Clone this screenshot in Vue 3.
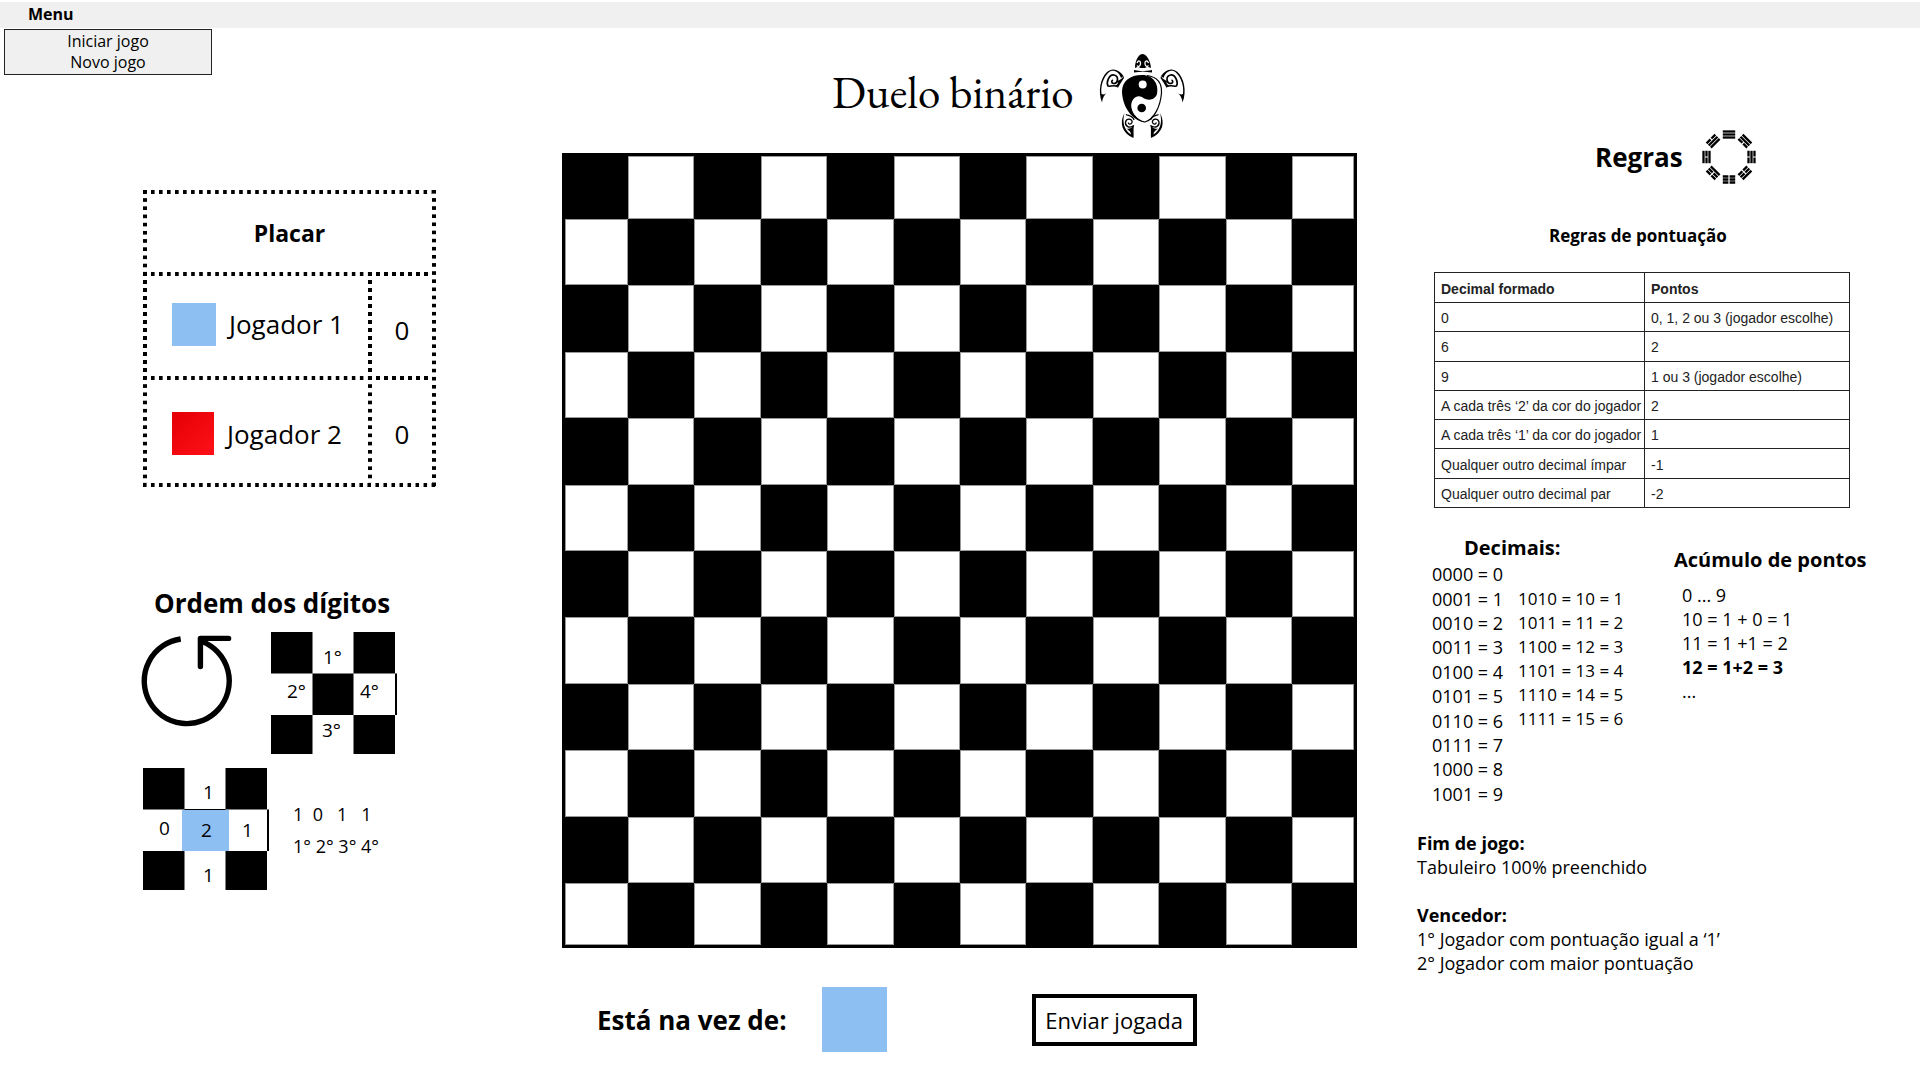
<script setup>
const size = 12
const cells = Array.from({ length: size * size }, (_, i) => (Math.floor(i / size) + i) % 2 === 0)

const players = [
  { name: 'Jogador 1', score: 0, tone: 'blue' },
  { name: 'Jogador 2', score: 0, tone: 'red' },
]

const exampleDigits = '1  0   1   1'

const scoring = [
  ['0', '0, 1, 2 ou 3 (jogador escolhe)'],
  ['6', '2'],
  ['9', '1 ou 3 (jogador escolhe)'],
  ['A cada três ‘2’ da cor do jogador', '2'],
  ['A cada três ‘1’ da cor do jogador', '1'],
  ['Qualquer outro decimal ímpar', '-1'],
  ['Qualquer outro decimal par', '-2'],
]

const single = ['0000 = 0', '0001 = 1', '0010 = 2', '0011 = 3', '0100 = 4', '0101 = 5', '0110 = 6', '0111 = 7', '1000 = 8', '1001 = 9']
const double = ['1010 = 10 = 1', '1011 = 11 = 2', '1100 = 12 = 3', '1101 = 13 = 4', '1110 = 14 = 5', '1111 = 15 = 6']

// Lines of each trigram from the outside in; 1 is whole, 0 is broken.
const trigrams = ['111', '110', '010', '100', '000', '001', '101', '011']
</script>

<template>
  <div class="page">
    <header class="menubar">
      <button type="button" class="menu-button">Menu</button>
      <ul class="menu">
        <li><button type="button">Iniciar jogo</button></li>
        <li><button type="button">Novo jogo</button></li>
      </ul>
    </header>

    <main class="columns">
      <section class="side">
        <div class="score-frame">
          <table class="score">
            <thead>
              <tr><th colspan="2">Placar</th></tr>
            </thead>
            <tbody>
              <tr v-for="p in players" :key="p.name" :class="p.tone">
                <td class="name">
                  <div class="player"><span class="swatch" :class="p.tone"></span>{{ p.name }}</div>
                </td>
                <td class="value">{{ p.score }}</td>
              </tr>
            </tbody>
          </table>
        </div>

        <h2 class="order-title">Ordem dos dígitos</h2>
        <div class="order-row">
          <svg class="turn" viewBox="0 -3 92 98" width="92" height="98" fill="none" stroke="#000" stroke-width="5.4">
            <path d="M39.7 4A42.5 42.5 0 1 0 61 6.4" />
            <path d="M87.6 3.4H59.4V31.6" stroke-linecap="round" stroke-linejoin="round" />
          </svg>
          <svg class="diagram" viewBox="0 0 126 122" width="126" height="122">
            <path d="M0 0H41.5V41.5H0ZM82.5 0H124V41.5H82.5ZM41.5 41.5H82.5V83H41.5ZM0 83H41.5V122H0ZM82.5 83H124V122H82.5ZM124 41.5H126V83H124Z" />
            <text x="52" y="32">1°</text>
            <text x="16" y="66">2°</text>
            <text x="89" y="66">4°</text>
            <text x="51" y="105">3°</text>
          </svg>
        </div>
        <div class="example-row">
          <svg class="diagram" viewBox="0 0 126 122" width="126" height="122">
            <path d="M0 0H41.5V41.5H0ZM82.5 0H124V41.5H82.5ZM0 83H41.5V122H0ZM82.5 83H124V122H82.5ZM124 41.5H126V83H124ZM41.5 41H82.5V42H41.5Z" />
            <rect x="39" y="42" width="47" height="41" fill="#8dbff2" />
            <text x="60" y="31">1</text>
            <text x="16" y="67">0</text>
            <text x="58" y="69">2</text>
            <text x="99" y="69">1</text>
            <text x="60" y="114">1</text>
          </svg>
          <div class="digits">
            <p>{{ exampleDigits }}</p>
            <p>1° 2° 3° 4°</p>
          </div>
        </div>
      </section>

      <section class="center">
        <div class="title-row">
          <h1>Duelo binário</h1>
          <svg viewBox="0 -2 100 100" width="100" height="100" aria-hidden="true">
            <path d="M44 23C44 15 48 9 51.5 9S59.5 15 60 23C57 21.5 55.5 22 54 23H49.5C48 22 46.5 21.500 44 23Z" />
            <path d="M43 25C49 26.500 54 26.500 61 25V27.500C54 26.500 49 26.500 43 27.500Z" />
            <path d="M46 18C47.500 14.500 50 16 49.500 19S47 22 46 20.500M57.500 18C56 14.500 53.500 16 54 19S56.500 22 57.500 20.500" fill="none" stroke="#fff" stroke-width="1.300" />
            <path d="M51 30C63 30 68 40 66 49C63.500 56 56 56 51 52C45 49 39 55 40.500 63C42 70 47 75 54 77.500C41 76 31 61 31 46C31.500 36 39 30 51 30Z" />
            <path d="M56 30.500C67 32 71 39 70.500 48C69.500 60 64 74 54 77C50 76.500 46 74 43 70" fill="none" stroke="#000" stroke-width="1.200" />
            <circle cx="51.700" cy="39.500" r="4" fill="#fff" />
            <circle cx="50.700" cy="63" r="4.300" />
            <g id="limbs">
              <path d="M32.500 31C28 24 21 22.500 16 27C9.500 33 6.500 46 11 57.500C11.500 53 13 50.500 15.500 48C13 50 11.500 49.500 10.500 49C9 38 15 28 20 26C24 25 28 27.500 30 33Z" />
              <path d="M32.500 31C31 34 28.500 35 26.500 36C27.500 38 26.500 40 24.500 40.500C26.500 41 27 42 26.500 43.500C28.500 40 30.500 36.500 33 33Z" />
              <path d="M26.500 41.500C23 39.500 18 42 17 41C15 37 18 29.500 23 30C28 31 27.500 38.500 22.500 38.500C20 38 20.500 35.500 22 35" fill="none" stroke="#000" stroke-width="1.700" />
              <path d="M33.500 68C28 78 31 88 42.500 93C43 89 42 85 43 80C40 84 38 84 35.500 83.500C38 85.500 40 87 40 89.500C33 85 31 77 33.500 68Z" />
              <path d="M43 80.500C38 84 34 81 34.500 77C36 72.500 42 74 41 77.500C40 80 37 79.500 37.500 77.500M35 69.500C38 71 42 71 43 75" fill="none" stroke="#000" stroke-width="1.300" />
            </g>
            <use href="#limbs" transform="translate(102.500 0) scale(-1 1)" />
          </svg>
        </div>

        <div class="board">
          <div v-for="(dark, i) in cells" :key="i" :class="{ dark }"></div>
        </div>

        <div class="turn-row">
          <h2>Está na vez de:</h2>
          <span class="current"></span>
          <button type="button" class="send">Enviar jogada</button>
        </div>
      </section>

      <section class="rules">
        <div class="rules-title">
          <h2>Regras</h2>
          <svg viewBox="-27 -27 54 54" width="54" height="54" aria-hidden="true">
            <g v-for="(t, i) in trigrams" :key="i" :transform="`rotate(${i * 45})`" stroke="#000" stroke-width="2.300">
              <path
                v-for="(bit, n) in t"
                :key="n"
                :d="bit === '1' ? `M-6.200 ${n * 3 - 25.500}H6.200` : `M-6.200 ${n * 3 - 25.500}H-.6M.6 ${n * 3 - 25.500}H6.200`"
              />
            </g>
          </svg>
        </div>
        <h3 class="scoring-title">Regras de pontuação</h3>
        <table class="scoring">
          <thead>
            <tr><th>Decimal formado</th><th>Pontos</th></tr>
          </thead>
          <tbody>
            <tr v-for="row in scoring" :key="row[0]">
              <td>{{ row[0] }}</td>
              <td>{{ row[1] }}</td>
            </tr>
          </tbody>
        </table>

        <div class="conversions">
          <div>
            <h3 class="decimals-title">Decimais:</h3>
            <div class="lists">
              <ul class="single"><li v-for="d in single" :key="d">{{ d }}</li></ul>
              <ul class="double"><li v-for="d in double" :key="d">{{ d }}</li></ul>
            </div>
          </div>
          <div class="sum">
            <h3>Acúmulo de pontos</h3>
            <ul>
              <li>0 ... 9</li>
              <li>10 = 1 + 0 = 1</li>
              <li>11 = 1 +1 = 2</li>
              <li><b>12 = 1+2 = 3</b></li>
              <li>...</li>
            </ul>
          </div>
        </div>

        <div class="ending">
          <h4>Fim de jogo:</h4>
          <p>Tabuleiro 100% preenchido</p>
          <h4 class="winner">Vencedor:</h4>
          <p>1° Jogador com pontuação igual a ‘1’</p>
          <p>2° Jogador com maior pontuação</p>
        </div>
      </section>
    </main>
  </div>
</template>

<style>
body {
  margin: 0;
  background: #fff;
}
</style>

<style scoped>
.page {
  font-family: "Open Sans", "Noto Sans", sans-serif;
  font-size: 18px;
  line-height: 24px;
  color: #000;
}
h1, h2, h3, h4, p, ul {
  margin: 0;
  padding: 0;
}
ul {
  list-style: none;
}
button {
  font: inherit;
  color: inherit;
  cursor: pointer;
}
svg {
  display: block;
  flex: none;
}

.menubar {
  position: relative;
  height: 26px;
  border-top: 2px solid #fff;
  background: #f0f0f0;
}
.menu-button {
  margin-left: 28px;
  padding: 0;
  border: 0;
  background: none;
  font-size: 16px;
  font-weight: 700;
  line-height: 24px;
  display: block;
}
.menu {
  position: absolute;
  top: 27px;
  left: 4px;
  box-sizing: border-box;
  width: 208px;
  padding: 1px 0;
  border: 1px solid #222;
  background: #f0f0f0;
}
.menu button {
  display: block;
  width: 100%;
  padding: 0;
  border: 0;
  background: none;
  font-size: 16px;
  line-height: 21px;
}

.columns {
  display: grid;
  grid-template-columns: 562fr 795fr 563fr;
}

.side {
  padding-top: 162px;
}
.score-frame {
  box-sizing: border-box;
  width: 293px;
  margin-left: 143px;
  padding: 0 4px 4px 0;
  background:
    linear-gradient(90deg, #000 4px, transparent 4px) 0 100% / calc((100% - 4px) / 36) 4px repeat-x,
    linear-gradient(#000 4px, transparent 4px) 100% 0 / 4px calc((100% - 4px) / 36) repeat-y;
}
.score {
  width: 289px;
  border-spacing: 0;
  font-size: 26px;
  line-height: 36px;
}
.score th,
.score td {
  padding: 0;
  background:
    linear-gradient(90deg, #000 4px, transparent 4px) 0 0 / 8px 4px round no-repeat,
    linear-gradient(#000 4px, transparent 4px) 0 0 / 4px 8px no-repeat round;
}
.score th {
  height: 78px;
  padding: 4px 0 0 4px;
  font-size: 23px;
}
.score .name {
  width: 225px;
}
.score .value {
  padding-left: 4px;
  text-align: center;
}
.score .blue td {
  height: 104px;
}
.score .blue .value {
  height: 92px;
  padding-top: 12px;
}
.score .red td {
  height: 99px;
  padding-top: 8px;
}
.player {
  display: flex;
  align-items: center;
  gap: 13px;
  padding-left: 29px;
}
.swatch {
  width: 44px;
  height: 43px;
  background: #8dbff2;
}
.swatch.red {
  width: 42px;
  background: linear-gradient(135deg, #e30005, #ff1019);
}
.order-title {
  margin: 98px 0 11px 154px;
  font-size: 26px;
  line-height: 36px;
}
.order-row {
  display: flex;
  gap: 38px;
  margin-left: 141px;
}
.example-row {
  display: flex;
  align-items: center;
  gap: 24px;
  margin: 14px 0 0 143px;
}
.diagram {
  font-size: 19px;
}
.digits {
  padding-top: 2px;
  line-height: 32px;
  white-space: pre;
}

.title-row {
  display: flex;
  align-items: center;
  gap: 17px;
  box-sizing: border-box;
  height: 125px;
  padding: 5px 0 0 270px;
}
h1 {
  font-family: "EB Garamond", "Liberation Serif", serif;
  font-size: 45px;
  font-weight: 400;
  line-height: 52px;
  padding-bottom: 3px;
  white-space: nowrap;
}
.board {
  display: grid;
  grid-template-columns: 63fr repeat(10, 66.4fr) 62fr;
  grid-template-rows: 63fr repeat(10, 66.4fr) 62fr;
  box-sizing: border-box;
  aspect-ratio: 1;
  border: 3px solid #000;
}
.board div {
  background: #fff;
  box-shadow: inset 0 0 0 1px #999;
}
.board .dark {
  background: #000;
  box-shadow: none;
}
.turn-row {
  display: flex;
  align-items: center;
  margin-top: 39px;
  padding-left: 35px;
}
.turn-row h2 {
  font-size: 26px;
  line-height: 36px;
}
.current {
  width: 65px;
  height: 65px;
  margin: 0 145px 0 35px;
  background: #8dbff2;
}
.send {
  width: 165px;
  height: 52px;
  padding: 0;
  border: 4px solid #000;
  background: #fff;
  font-size: 22px;
}

.rules {
  padding-top: 102px;
}
.rules-title {
  display: flex;
  align-items: center;
  gap: 19px;
  padding-left: 238px;
}
.rules-title h2 {
  font-size: 26px;
  line-height: 54px;
}
h3 {
  font-size: 20px;
  line-height: 28px;
}
.scoring-title {
  margin: 40px 0 24px 192px;
  font-size: 17px;
  line-height: 24px;
}
.scoring {
  width: 416px;
  height: 236px;
  margin-left: 77px;
  border-collapse: collapse;
  table-layout: fixed;
  font-family: "Liberation Sans", Arial, sans-serif;
  font-size: 14px;
  line-height: 16px;
  color: #222;
}
.scoring th,
.scoring td {
  padding: 2px 0 0 6px;
  border: 1px solid #222;
  text-align: left;
  white-space: nowrap;
}
.scoring th {
  height: 27px;
}
.scoring th:first-child {
  width: 203px;
}
.conversions {
  display: grid;
  grid-template-columns: 242px auto;
  margin-top: 26px;
  padding-left: 75px;
}
.decimals-title {
  padding-left: 32px;
}
.lists {
  display: flex;
  gap: 15px;
}
.single {
  display: grid;
  grid-auto-rows: 1fr;
  align-items: center;
  height: 244px;
}
.double {
  margin-top: 25px;
  font-size: 17px;
}
.sum {
  padding-top: 12px;
}
.sum ul {
  padding: 9px 0 0 8px;
}
.ending {
  margin: 25px 0 0 60px;
}
h4 {
  font-size: 18px;
  line-height: 24px;
}
.winner {
  margin-top: 24px;
}
</style>
